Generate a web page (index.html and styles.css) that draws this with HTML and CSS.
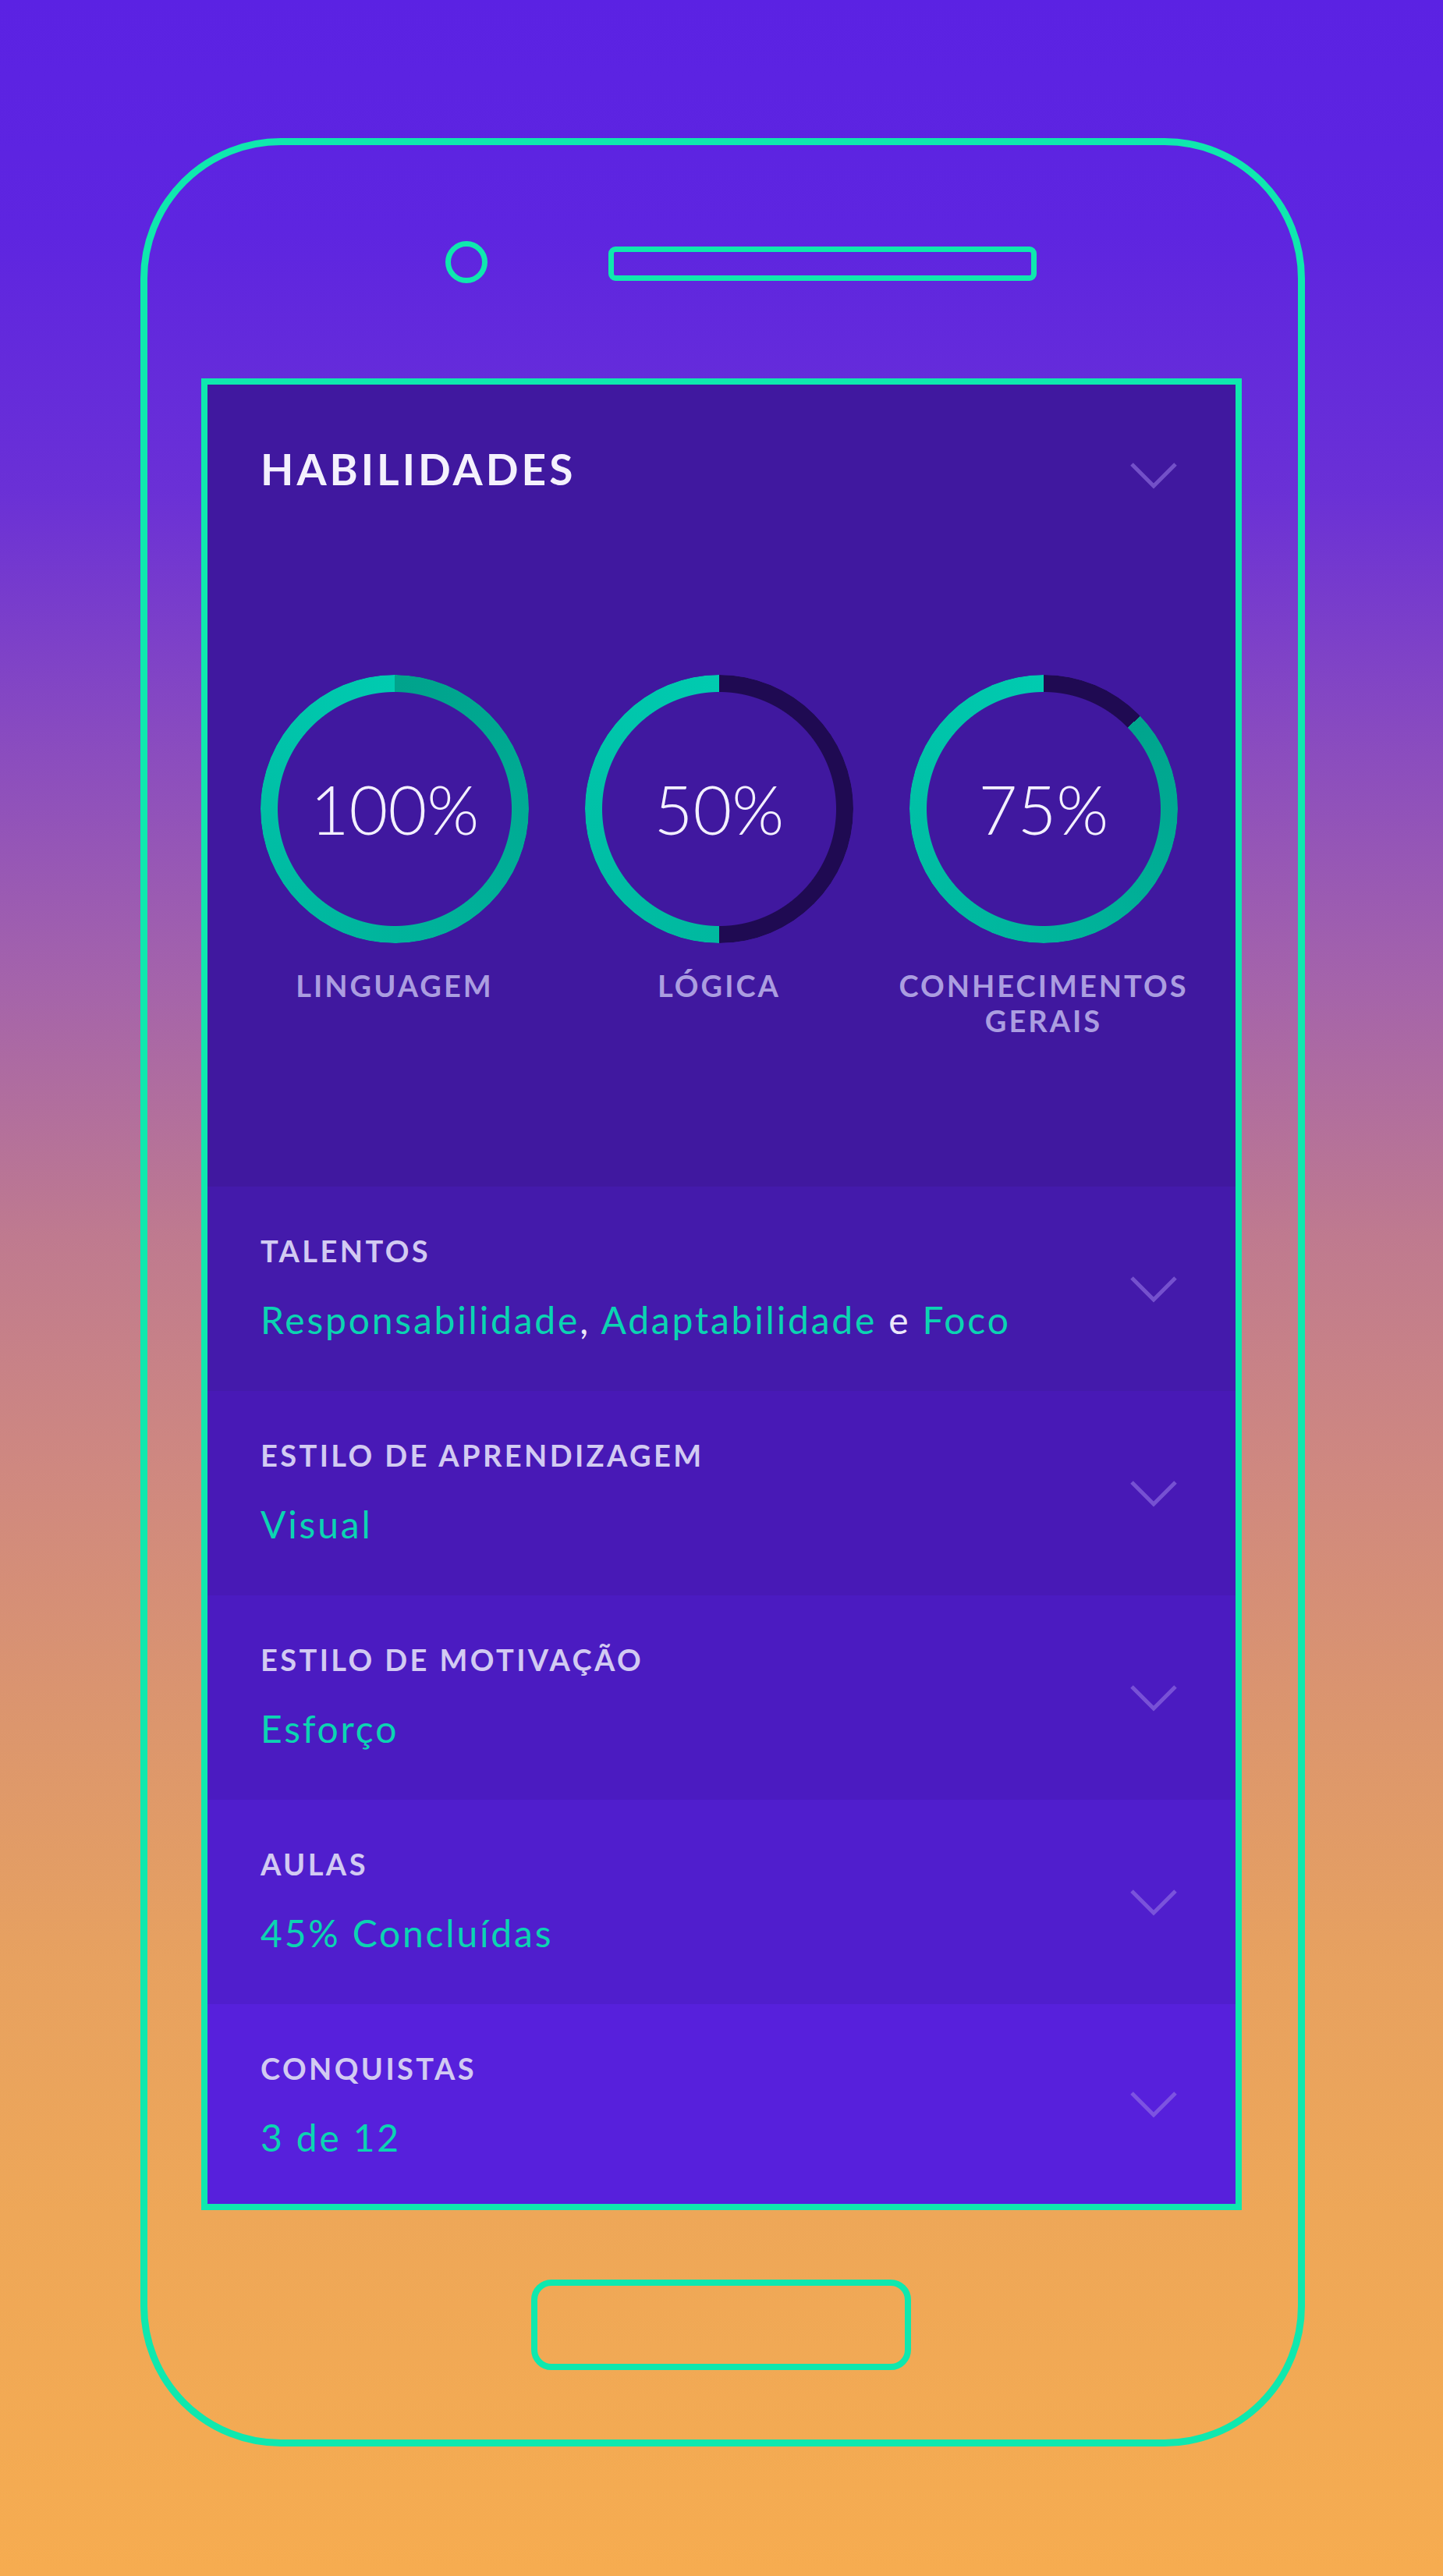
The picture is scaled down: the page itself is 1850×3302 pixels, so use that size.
FILE: index.html
```html
<!DOCTYPE html>
<html lang="pt-BR">
<head>
<meta charset="utf-8">
<title>Habilidades</title>
<link rel="stylesheet" href="styles.css">
</head>
<body>
<div class="phone">
  <div class="phone-top">
    <div class="camera"></div>
    <div class="speaker"></div>
  </div>
  <div class="screen">
    <section class="skills">
      <div class="skills-head">
        <h1 class="skills-title">HABILIDADES</h1>
        <svg class="chev chev-head" width="62" height="35" viewBox="0 0 62 35"><polyline points="3,3 31,31 59,3"/></svg>
      </div>
      <div class="rings">
        <div class="ring-col">
          <div class="ring ring-100"><span class="ring-val">100%</span></div>
          <div class="ring-label">LINGUAGEM</div>
        </div>
        <div class="ring-col">
          <div class="ring ring-50"><span class="ring-val">50%</span></div>
          <div class="ring-label">LÓGICA</div>
        </div>
        <div class="ring-col">
          <div class="ring ring-75"><span class="ring-val">75%</span></div>
          <div class="ring-label">CONHECIMENTOS<br>GERAIS</div>
        </div>
      </div>
    </section>
    <section class="row row-1">
      <div class="row-text">
        <div class="row-label">TALENTOS</div>
        <div class="row-value">Responsabilidade<span class="sep">,</span> Adaptabilidade <span class="sep">e</span> Foco</div>
      </div>
      <svg class="chev" width="62" height="35" viewBox="0 0 62 35"><polyline points="3,3 31,31 59,3"/></svg>
    </section>
    <section class="row row-2">
      <div class="row-text">
        <div class="row-label">ESTILO DE APRENDIZAGEM</div>
        <div class="row-value">Visual</div>
      </div>
      <svg class="chev" width="62" height="35" viewBox="0 0 62 35"><polyline points="3,3 31,31 59,3"/></svg>
    </section>
    <section class="row row-3">
      <div class="row-text">
        <div class="row-label">ESTILO DE MOTIVAÇÃO</div>
        <div class="row-value">Esforço</div>
      </div>
      <svg class="chev" width="62" height="35" viewBox="0 0 62 35"><polyline points="3,3 31,31 59,3"/></svg>
    </section>
    <section class="row row-4">
      <div class="row-text">
        <div class="row-label">AULAS</div>
        <div class="row-value">45% Concluídas</div>
      </div>
      <svg class="chev" width="62" height="35" viewBox="0 0 62 35"><polyline points="3,3 31,31 59,3"/></svg>
    </section>
    <section class="row row-5">
      <div class="row-text">
        <div class="row-label">CONQUISTAS</div>
        <div class="row-value">3 de 12</div>
      </div>
      <svg class="chev" width="62" height="35" viewBox="0 0 62 35"><polyline points="3,3 31,31 59,3"/></svg>
    </section>
  </div>
  <div class="phone-bottom">
    <div class="home"></div>
  </div>
</div>
</body>
</html>
```

FILE: styles.css
```css
* { box-sizing: border-box; }

html, body {
  margin: 0;
  padding: 0;
}

body {
  width: 1850px;
  height: 3302px;
  overflow: hidden;
  font-family: "Lato", "Noto Sans", sans-serif;
  background: linear-gradient(180deg,
    #5b22e3 0%,
    #5e25e0 9%,
    #6a30d6 19%,
    #8a4cbf 29%,
    #a463ab 38%,
    #bf7a8f 48%,
    #cf8880 57%,
    #dc966d 67%,
    #e7a160 76%,
    #eea758 86%,
    #f6ac50 100%);
  padding-top: 177px;
  padding-left: 180px;
}

.phone {
  width: 1493px;
  height: 2959px;
  border: 9px solid #0fe8ae;
  border-radius: 180px;
  display: flex;
  flex-direction: column;
}

.phone-top {
  height: 299px;
  display: flex;
  align-items: center;
  padding-left: 382px;
  gap: 155px;
}

.camera {
  width: 54px;
  height: 54px;
  border: 7px solid #0fe8ae;
  border-radius: 50%;
}

.speaker {
  width: 549px;
  height: 44px;
  border: 7px solid #0fe8ae;
  border-radius: 9px;
  margin-top: 4px;
}

.screen {
  margin-left: 69px;
  width: 1334px;
  height: 2348px;
  border: 8px solid #0fe8ae;
  display: flex;
  flex-direction: column;
}

.phone-bottom {
  flex: 1;
  display: flex;
  align-items: center;
  justify-content: center;
  padding-right: 4px;
}

.home {
  width: 487px;
  height: 116px;
  border: 8px solid #0fe8ae;
  border-radius: 26px;
}

/* Habilidades panel */
.skills {
  height: 1028px;
  background: #40189f;
  padding: 81px 74px 0 68px;
}

.skills-head {
  display: flex;
  justify-content: space-between;
  align-items: flex-start;
}

.skills-title {
  margin: 0;
  font-size: 55px;
  line-height: 55px;
  font-weight: 700;
  color: #f4f1fd;
  letter-spacing: 4px;
}

.chev {
  flex: none;
  fill: none;
  stroke: rgba(150, 118, 228, 0.6);
  stroke-width: 5;
}

.chev-head {
  margin-top: 18px;
}

.rings {
  margin-top: 236px;
  display: flex;
  justify-content: space-between;
}

.ring-col {
  width: 344px;
  display: flex;
  flex-direction: column;
  align-items: center;
}

.ring {
  width: 344px;
  height: 344px;
  border-radius: 50%;
  position: relative;
  display: flex;
  align-items: center;
  justify-content: center;
}

.ring::before {
  content: "";
  position: absolute;
  inset: 0;
  border-radius: 50%;
  -webkit-mask: radial-gradient(circle at center, transparent 149.5px, #000 150.5px);
  mask: radial-gradient(circle at center, transparent 149.5px, #000 150.5px);
}

.ring-100::before {
  background: conic-gradient(#00a38c 0deg, #00b49c 180deg, #00cbb0 360deg);
}

.ring-50::before {
  background: conic-gradient(#1f0a52 0deg 180deg, #00b89f 180deg, #00cbb0 360deg);
}

.ring-75::before {
  background: conic-gradient(#1f0a52 0deg 46deg, #00a48d 46deg, #00cbb0 360deg);
}

.ring-val {
  position: relative;
  font-size: 86px;
  font-weight: 300;
  color: #f3f0ff;
  line-height: 1;
}

.ring-label {
  margin-top: 32px;
  width: max-content;
  font-size: 38px;
  line-height: 45px;
  font-weight: 700;
  letter-spacing: 3px;
  color: #ab9de0;
  text-align: center;
}

/* rows */
.row {
  height: 262px;
  display: flex;
  justify-content: space-between;
  align-items: center;
  padding: 0 74px 0 68px;
}

.row-1 { background: #441aab; }
.row-2 { background: #4819b6; }
.row-3 { background: #4b1bc1; }
.row-4 { background: #501ecd; }
.row-5 { background: #5720dc; flex: 1; height: auto; }

.row-text {
  align-self: flex-start;
  padding-top: 64px;
}

.row-label {
  font-size: 38px;
  line-height: 37px;
  font-weight: 700;
  letter-spacing: 3.4px;
  color: #d2caf2;
}

.row-value {
  margin-top: 46px;
  font-size: 48px;
  line-height: 48px;
  font-weight: 400;
  letter-spacing: 2.8px;
  color: #0bd4b2;
}

.sep {
  color: #ebe7fa;
}
```
